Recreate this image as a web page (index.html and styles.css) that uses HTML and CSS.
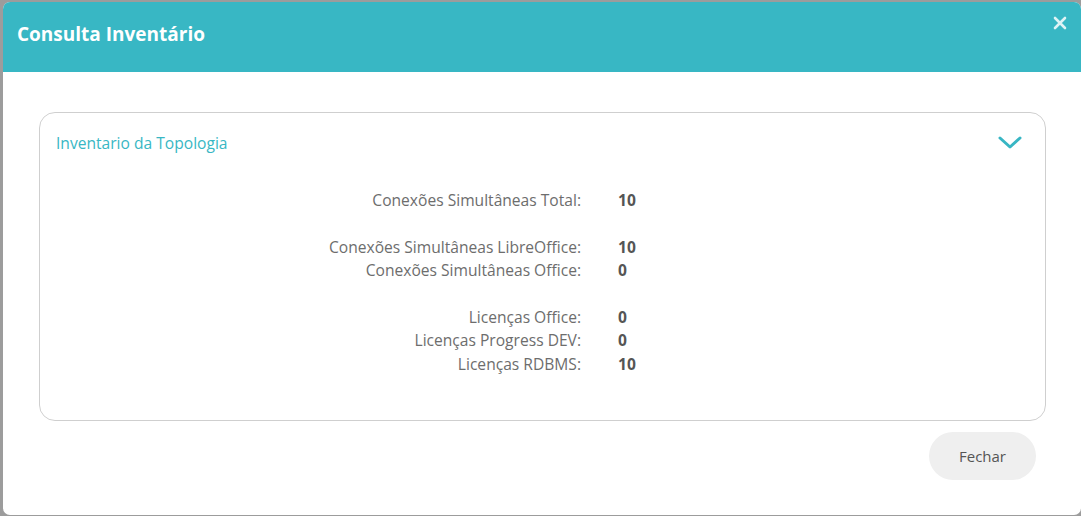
FILE: index.html
```html
<!DOCTYPE html>
<html lang="pt-br">
<head>
    <meta charset="UTF-8">
    <meta name="viewport" content="width=device-width, initial-scale=1.0">
    <title>Consulta Inventário</title>
    <link rel="stylesheet" href="styles.css">
</head>
<body>
    <div class="modal">
        <div class="modal-header">
            <h2>Consulta Inventário</h2>
            <svg class="close" width="14" height="14" viewBox="0 0 14 14">
                <path d="M2 2 L12 12 M12 2 L2 12" stroke="#dff3f5" stroke-width="2.6" stroke-linecap="round"/>
            </svg>
        </div>
        <div class="modal-body">
            <div class="card">
                <div class="card-title">
                    <span>Inventario da Topologia</span>
                    <svg width="24" height="14" viewBox="0 0 24 14">
                        <path d="M2 2 L12 11 L22 2" fill="none" stroke="#38b6c4" stroke-width="3" stroke-linecap="round" stroke-linejoin="round"/>
                    </svg>
                </div>
                <div class="info">
                    <span class="label">Conexões Simultâneas Total:</span><span class="value">10</span>
                    <span class="label">&nbsp;</span><span class="value"></span>
                    <span class="label">Conexões Simultâneas LibreOffice:</span><span class="value">10</span>
                    <span class="label">Conexões Simultâneas Office:</span><span class="value">0</span>
                    <span class="label">&nbsp;</span><span class="value"></span>
                    <span class="label">Licenças Office:</span><span class="value">0</span>
                    <span class="label">Licenças Progress DEV:</span><span class="value">0</span>
                    <span class="label">Licenças RDBMS:</span><span class="value">10</span>
                </div>
            </div>
            <div class="footer">
                <button>Fechar</button>
            </div>
        </div>
    </div>
</body>
</html>
```

FILE: styles.css
```css
body {
    margin: 0;
    padding: 2px 0 0 3px;
    background-color: #9c9c9c;
    font-family: "Open Sans", Arial, sans-serif;
    height: 516px;
    box-sizing: border-box;
    overflow: hidden;
}

.modal {
    height: 513px;
    background-color: #fff;
    border-radius: 7px;
    overflow: hidden;
}

.modal-header {
    height: 70px;
    background-color: #38b7c4;
    display: flex;
    justify-content: space-between;
    align-items: flex-start;
    padding: 0 14px 0 14px;
}

.modal-header h2 {
    margin: 19px 0 0 0;
    color: #fff;
    font-size: 19px;
    font-weight: 700;
}

.close {
    margin-top: 14px;
}

.modal-body {
    padding: 40px 35px 0 36px;
}

.card {
    border: 1px solid #cfcfcf;
    border-radius: 16px;
    padding: 19px 23px 44px 16px;
}

.card-title {
    display: flex;
    justify-content: space-between;
    align-items: center;
    color: #38b7c4;
    font-size: 15.6px;
    line-height: 22px;
}

.info {
    display: grid;
    grid-template-columns: 525px 1fr;
    column-gap: 37px;
    margin-top: 35px;
    font-size: 15.6px;
    line-height: 23.4px;
}

.label {
    text-align: right;
    color: #6d6d6d;
}

.value {
    color: #555;
    font-weight: 700;
}

.footer {
    display: flex;
    justify-content: flex-end;
    padding: 11px 10px 0 0;
}

button {
    width: 107px;
    height: 48px;
    border: none;
    border-radius: 24px;
    background-color: #efefef;
    color: #555;
    font-family: "Open Sans", Arial, sans-serif;
    font-size: 15px;
}
```
